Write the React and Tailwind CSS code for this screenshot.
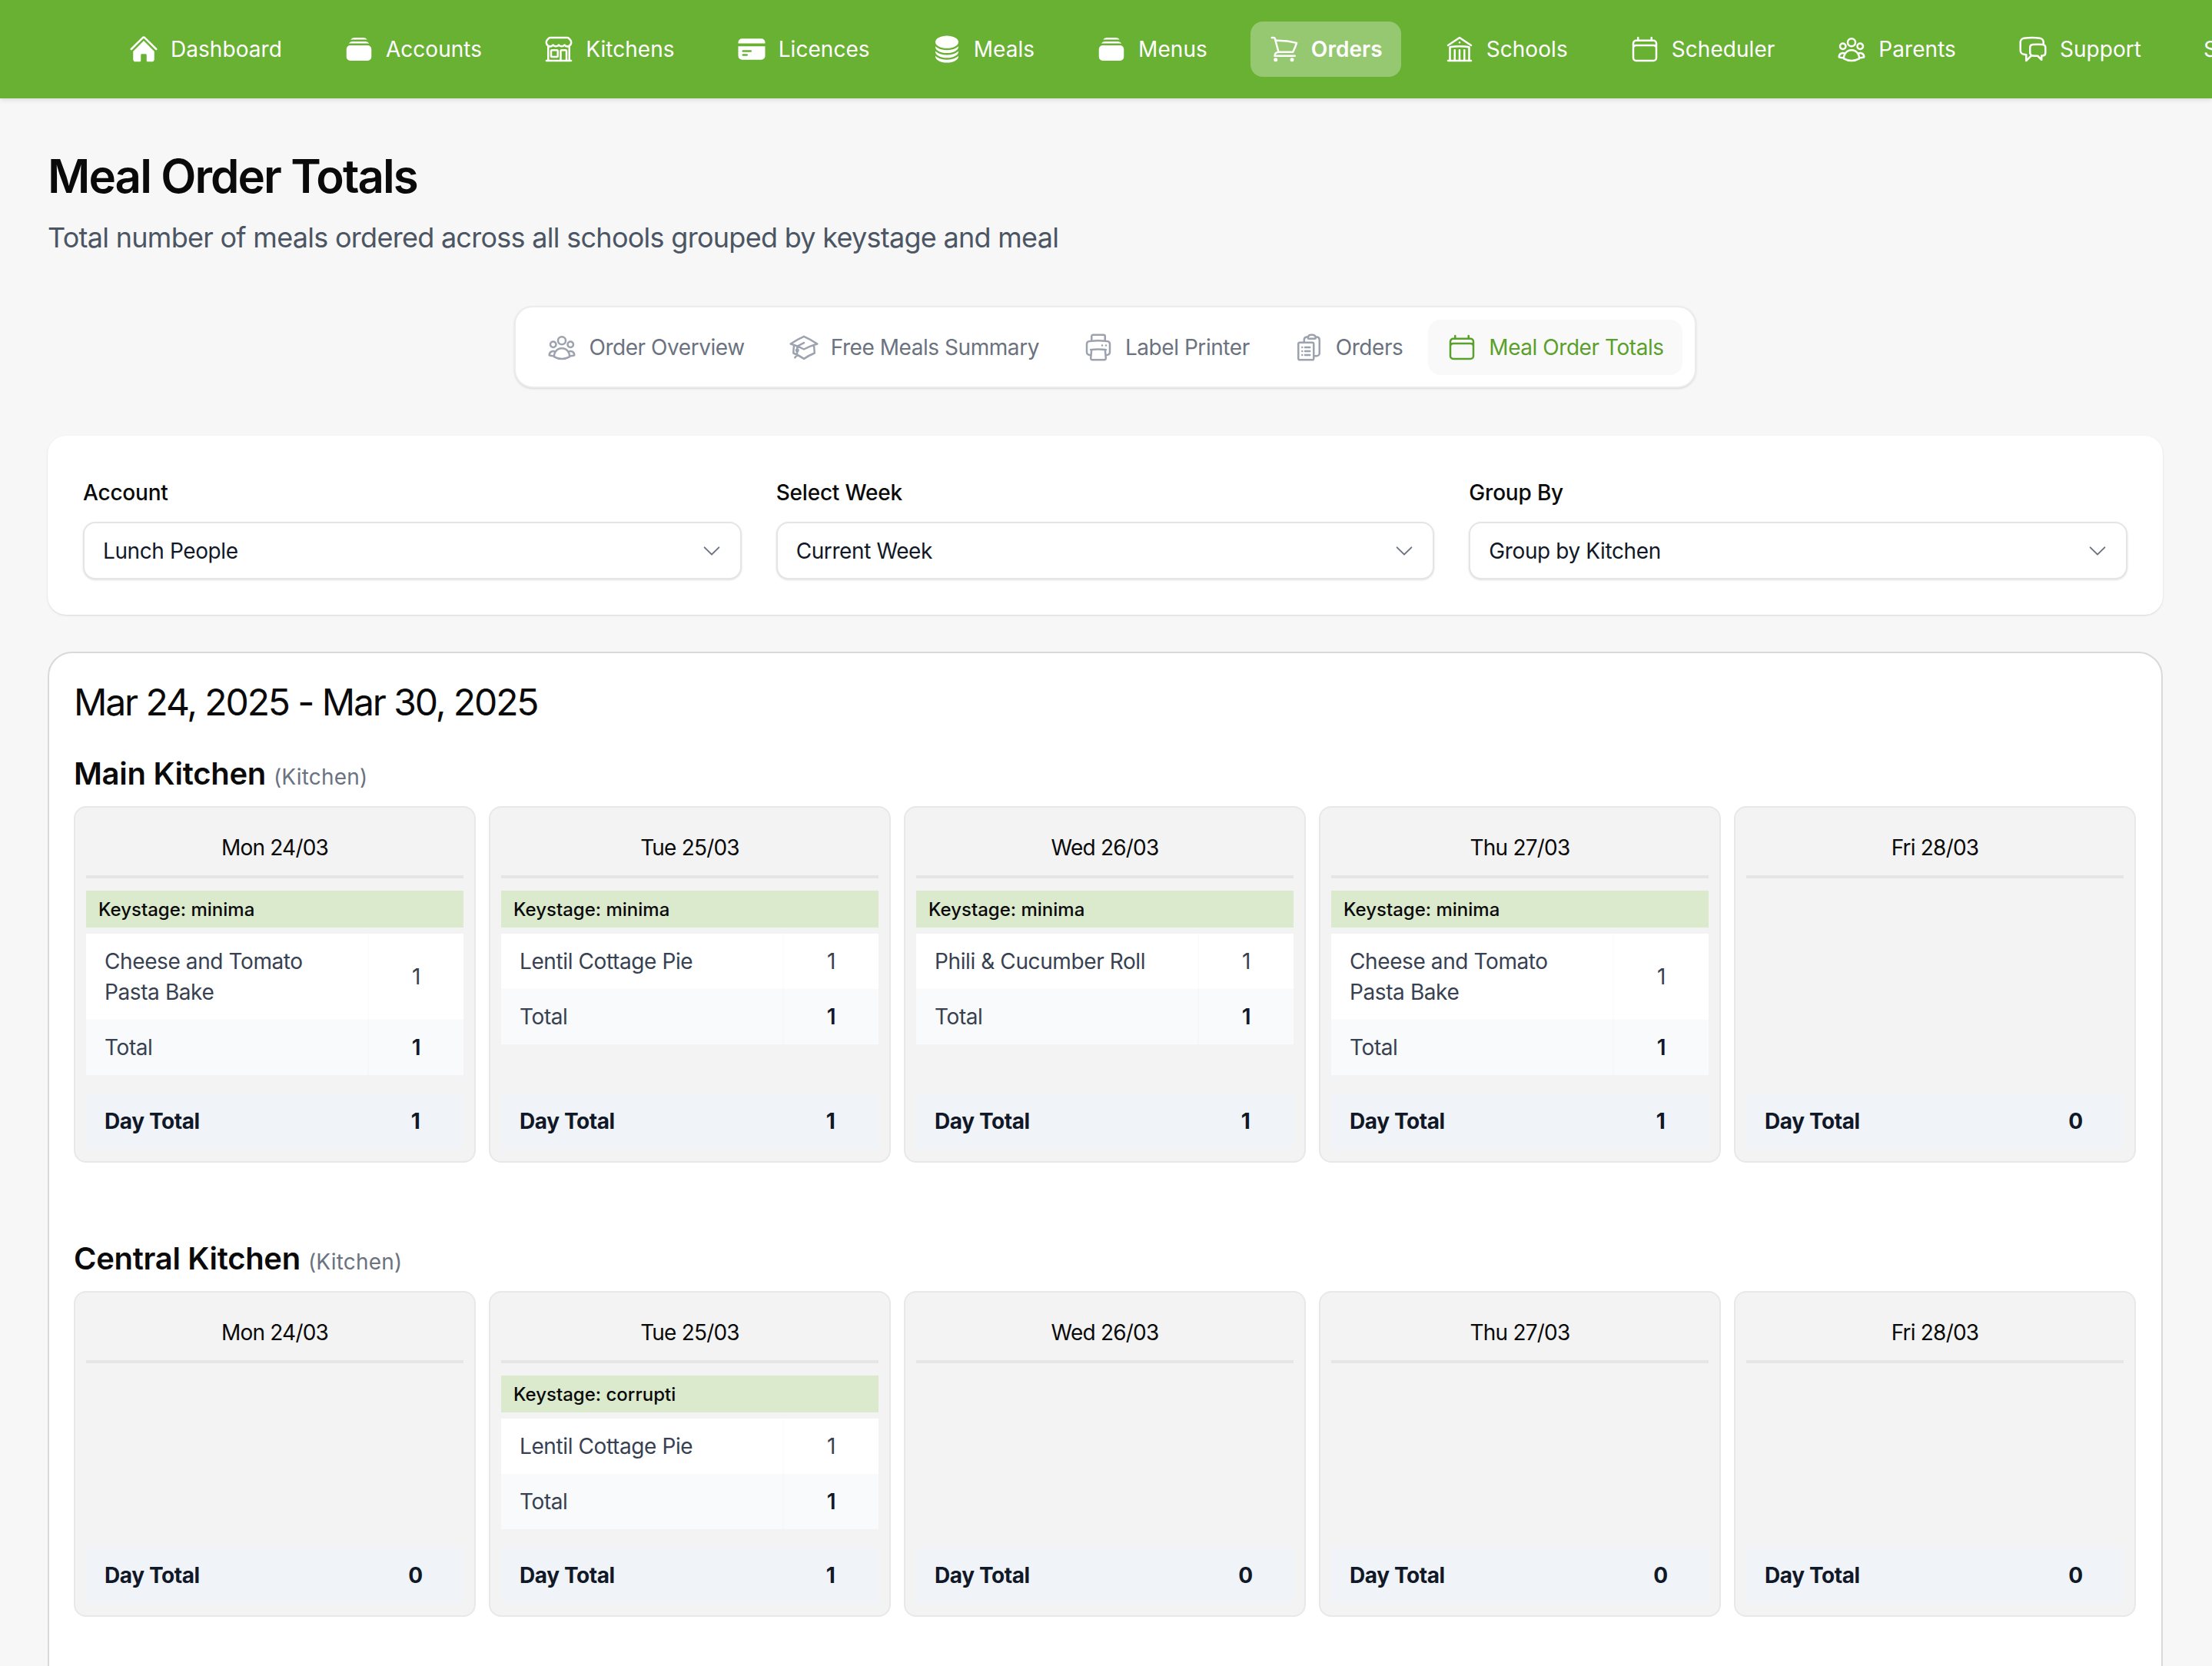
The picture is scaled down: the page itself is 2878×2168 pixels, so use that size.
import {
  HiHome,
  HiRectangleStack,
  HiCreditCard,
  HiCircleStack,
  HiOutlineBuildingLibrary,
  HiOutlineBuildingStorefront,
  HiOutlineShoppingCart,
  HiOutlineCalendar,
  HiOutlineUserGroup,
  HiOutlineChatBubbleLeftRight,
  HiOutlineAcademicCap,
  HiOutlinePrinter,
  HiOutlineClipboardDocumentList,
  HiChevronDown,
} from 'react-icons/hi2'

const navItems = [
  { label: 'Dashboard', icon: HiHome },
  { label: 'Accounts', icon: HiRectangleStack },
  { label: 'Kitchens', icon: HiOutlineBuildingStorefront },
  { label: 'Licences', icon: HiCreditCard },
  { label: 'Meals', icon: HiCircleStack },
  { label: 'Menus', icon: HiRectangleStack },
  { label: 'Orders', icon: HiOutlineShoppingCart, active: true },
  { label: 'Schools', icon: HiOutlineBuildingLibrary },
  { label: 'Scheduler', icon: HiOutlineCalendar },
  { label: 'Parents', icon: HiOutlineUserGroup },
  { label: 'Support', icon: HiOutlineChatBubbleLeftRight },
]

const tabs = [
  { label: 'Order Overview', icon: HiOutlineUserGroup },
  { label: 'Free Meals Summary', icon: HiOutlineAcademicCap },
  { label: 'Label Printer', icon: HiOutlinePrinter },
  { label: 'Orders', icon: HiOutlineClipboardDocumentList },
  { label: 'Meal Order Totals', icon: HiOutlineCalendar, active: true },
]

const filters = [
  { label: 'Account', value: 'Lunch People' },
  { label: 'Select Week', value: 'Current Week' },
  { label: 'Group By', value: 'Group by Kitchen' },
]

const mainDays = [
  { day: 'Mon 24/03', stage: 'minima', meal: 'Cheese and Tomato Pasta Bake', total: 1 },
  { day: 'Tue 25/03', stage: 'minima', meal: 'Lentil Cottage Pie', total: 1 },
  { day: 'Wed 26/03', stage: 'minima', meal: 'Phili & Cucumber Roll', total: 1 },
  { day: 'Thu 27/03', stage: 'minima', meal: 'Cheese and Tomato Pasta Bake', total: 1 },
  { day: 'Fri 28/03', total: 0 },
]

const centralDays = [
  { day: 'Mon 24/03', total: 0 },
  { day: 'Tue 25/03', stage: 'corrupti', meal: 'Lentil Cottage Pie', total: 1 },
  { day: 'Wed 26/03', total: 0 },
  { day: 'Thu 27/03', total: 0 },
  { day: 'Fri 28/03', total: 0 },
]

function DayCard({ day, stage, meal, total }) {
  return (
    <div className="flex flex-col rounded-[16px] border-2 border-[#e8e8e8] bg-[#f3f3f3] px-[14px] py-4">
      <div className="border-b-4 border-[#e5e5e5] py-4 text-center text-[28px] leading-[40px] tracking-[-0.8px] text-[#0a0a0a]">
        {day}
      </div>
      {stage && (
        <div className="mt-4">
          <div className="flex h-12 items-center bg-[#dbe9cd] px-4 pt-px text-[24px] font-medium text-[#0a0a0a]">
            Keystage: {stage}
          </div>
          <div className="mt-2 grid grid-cols-[366px_1fr] text-[28px] leading-[40px] tracking-[-0.4px] text-[#374151]">
            <div className="bg-white py-4 pl-6 pr-12">{meal}</div>
            <div className="flex items-center justify-center border-l-2 border-[#fcfcfd] bg-white">1</div>
            <div className="bg-[#f9fafb] py-4 pl-6">Total</div>
            <div className="flex items-center justify-center border-l-2 border-[#f6f7f9] bg-[#f9fafb] font-semibold text-[#111827]">1</div>
          </div>
        </div>
      )}
      <div className="mt-auto pt-6">
        <div className="grid h-[72px] grid-cols-[366px_1fr] items-center bg-[#f0f3f8] text-[28px] font-bold tracking-[-0.4px] text-[#111827]">
          <div className="pl-6">Day Total</div>
          <div className="text-center">{total}</div>
        </div>
      </div>
    </div>
  )
}

function KitchenSection({ name, days, className }) {
  return (
    <section className={className}>
      <h3 className="flex items-baseline gap-2.5 text-[40px] leading-[56px] font-semibold tracking-[-0.3px] text-[#0a0a0a]">
        {name}
        <span className="text-[28px] font-normal tracking-[0.2px] text-[#6b7280]">(Kitchen)</span>
      </h3>
      <div className="mt-[10px] grid grid-cols-5 gap-[17px]">
        {days.map((d) => (
          <DayCard key={d.day} {...d} />
        ))}
      </div>
    </section>
  )
}

export default function App() {
  return (
    <div className="h-[2168px] w-[2878px] overflow-hidden bg-[#f7f7f7] font-['Inter',sans-serif]">
      {/* Top nav */}
      <nav className="flex h-[128px] items-center gap-[32px] overflow-hidden bg-[#68b133] pl-[143px] tracking-[0.05px] shadow-[0_2px_6px_rgba(0,0,0,0.12)]">
        {navItems.map(({ label, icon: Icon, active }) => (
          <a
            key={label}
            className={`flex h-[72px] shrink-0 items-center gap-[15px] rounded-[16px] px-[24px] text-[28px] text-white ${
              active ? 'bg-white/30 font-semibold' : 'font-normal'
            }`}
          >
            <Icon className="h-[40px] w-[40px] shrink-0" />
            {label}
          </a>
        ))}
        <span className="shrink-0 pl-[25px] text-[28px] text-white">Settings</span>
      </nav>

      <main className="pl-[62px] pr-[64px]">
        <h1 className="mt-[61px] text-[60px] leading-[80px] font-semibold tracking-[-1.9px] text-[#0a0a0a]">
          Meal Order Totals
        </h1>
        <p className="mt-[12px] text-[36px] leading-[56px] tracking-[-0.72px] text-[#4b5563]">
          Total number of meals ordered across all schools grouped by keystage and meal
        </p>

        {/* Tabs */}
        <div className="mt-[61px] flex justify-center">
          <div className="flex h-[107px] items-center gap-[9px] rounded-[24px] border-2 border-[#ececec] bg-white px-[16px] shadow-sm">
            {tabs.map(({ label, icon: Icon, active }) => (
              <div
                key={label}
                className={`flex h-[72px] items-center gap-[15px] rounded-[16px] px-[24px] text-[28px] font-normal tracking-[-0.45px] ${
                  active ? 'bg-[#f9f9f9] text-[#5aa02c]' : 'text-[#6b7280]'
                }`}
              >
                <Icon className={`h-[40px] w-[40px] ${active ? 'text-[#5aa02c]' : 'text-[#9ca3af]'}`} />
                {label}
              </div>
            ))}
          </div>
        </div>

        {/* Filters */}
        <div className="mt-[62px] grid h-[233px] grid-cols-3 gap-[45px] rounded-[24px] bg-white px-[46px] pt-[54px] shadow-sm">
          {filters.map((f) => (
            <div key={f.label}>
              <label className="block text-[28px] leading-[40px] font-medium tracking-[-0.2px] text-[#0a0a0a]">{f.label}</label>
              <div className="mt-[18px] flex h-[75px] items-center justify-between rounded-[16px] border-2 border-[#e5e5e5] bg-white pl-[24px] pr-[22px] text-[28px] tracking-[-0.4px] text-[#111827] shadow-sm">
                {f.value}
                <HiChevronDown className="h-[30px] w-[30px] text-[#6b7280]" />
              </div>
            </div>
          ))}
        </div>

        {/* Results */}
        <div className="mt-[48px] rounded-[32px] border-2 border-[#d9d9d9] bg-white pb-[200px] pl-[32px] pr-[33px] pt-[32px]">
          <h2 className="text-[48px] leading-[64px] font-normal tracking-[-2.1px] text-[#0a0a0a]">Mar 24, 2025 - Mar 30, 2025</h2>
          <KitchenSection name="Main Kitchen" days={mainDays} className="mt-[33px]" />
          <KitchenSection name="Central Kitchen" days={centralDays} className="mt-[97px]" />
        </div>
      </main>
    </div>
  )
}
